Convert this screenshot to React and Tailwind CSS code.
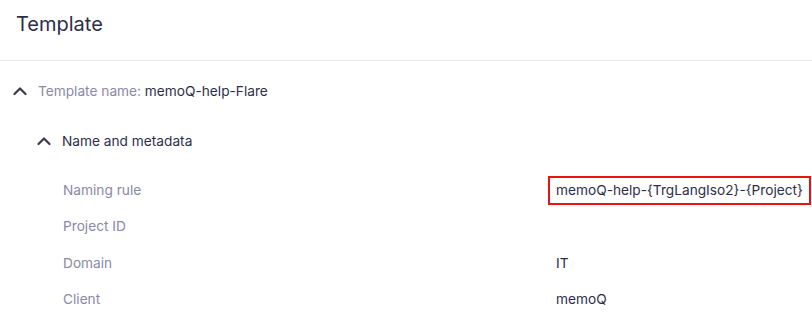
import React from "react";

function Chevron() {
  return (
    <svg width="14" height="10" viewBox="0 0 14 10" fill="none" className="shrink-0">
      <path d="M1.5 8 L7 2.5 L12.5 8" stroke="#3b3a55" strokeWidth="2.2" strokeLinecap="round" strokeLinejoin="round" />
    </svg>
  );
}

const rows = [
  { label: "Naming rule", value: "memoQ-help-{TrgLangIso2}-{Project}", hl: true },
  { label: "Project ID", value: "" },
  { label: "Domain", value: "IT" },
  { label: "Client", value: "memoQ" },
];

export default function App() {
  return (
    <div className="w-[812px] h-[320px] bg-white overflow-hidden text-[#33334d]" style={{ fontFamily: "Inter, 'Noto Sans', sans-serif" }}>
      <div className="h-[61px] border-b border-[#e8e8ec] px-4 pt-[9px] text-[20px] leading-[30px] text-[#2e2e48] font-normal">
        Template
      </div>
      <div className="pl-[13px] pt-[15px]">
        <div className="flex items-center h-[30px] gap-[11px] text-[13.7px]">
          <Chevron />
          <div>
            <span className="text-[#8a89a6]">Template name: </span>
            <span className="text-[#2e2e48]">memoQ-help-Flare</span>
          </div>
        </div>
        <div className="flex items-center h-[30px] gap-[11px] text-[13.7px] mt-[20px] pl-[24px] text-[#2e2e48]">
          <Chevron />
          <span>Name and metadata</span>
        </div>
        <div className="mt-[16px] pl-[50px] text-[13.7px]">
          {rows.map((r) => (
            <div key={r.label} className="grid grid-cols-[485px_1fr] h-[36.5px] items-center">
              <div className="text-[#8a89a6]">{r.label}</div>
              <div>
                <span className={`inline-flex items-center whitespace-nowrap h-[29px] px-[6px] border-2 ${r.hl ? "border-[#ee1111]" : "border-transparent"} text-[#2e2e48]`}>
                  {r.value}
                </span>
              </div>
            </div>
          ))}
        </div>
      </div>
    </div>
  );
}
